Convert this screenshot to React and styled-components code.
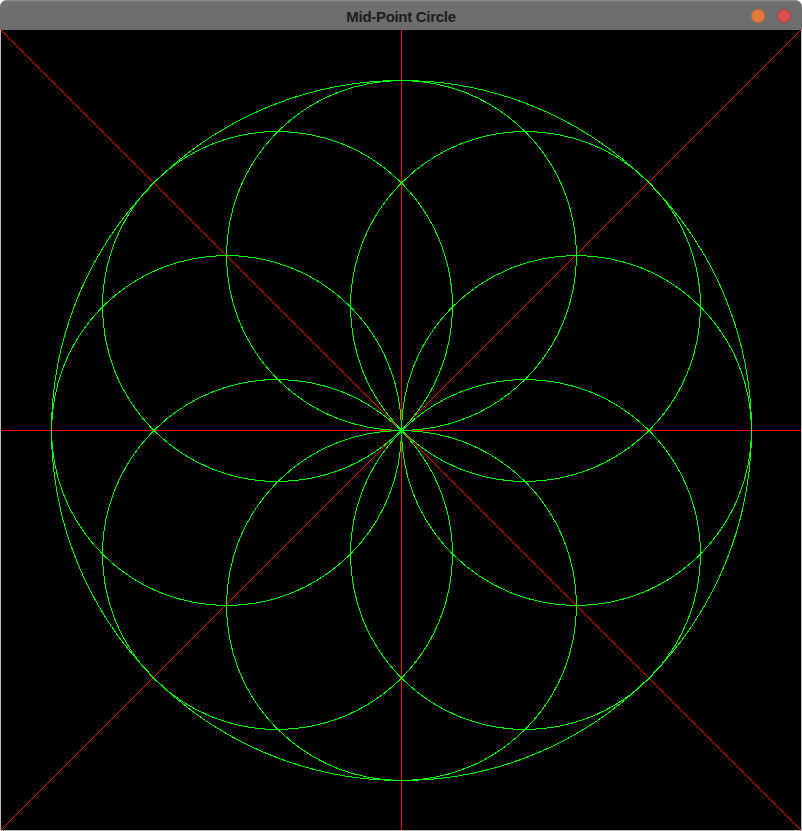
import React from 'react';
import styled, { createGlobalStyle } from 'styled-components';

const Global = createGlobalStyle`
  html, body { margin: 0; padding: 0; background: #ffffff; }
`;

const Window = styled.div`
  width: 802px;
  height: 831px;
  display: flex;
  flex-direction: column;
  border-radius: 7px 7px 0 0;
  overflow: hidden;
  background: #bdbdbd;
`;

const TitleBar = styled.div`
  height: 30px;
  flex: 0 0 30px;
  display: flex;
  align-items: center;
  justify-content: center;
  position: relative;
  background: linear-gradient(#7a7a7a 0px, #6f6f6f 2px, #6c6c6c 100%);
  border-top: 1px solid #8a8a8a;
  box-sizing: border-box;
`;

const Title = styled.span`
  font-family: "Liberation Sans", Arial, sans-serif;
  font-weight: bold;
  font-size: 15px;
  color: #1c1c1c;
  letter-spacing: -0.3px;
  padding-top: 1px;
`;

const Buttons = styled.div`
  position: absolute;
  right: 11px;
  top: 8px;
  display: flex;
  gap: 12px;
`;

const Dot = styled.span`
  width: 14px;
  height: 14px;
  border-radius: 50%;
  box-sizing: border-box;
  background: ${p => p.$color};
  border: 1px solid ${p => p.$edge};
`;

const CanvasArea = styled.div`
  flex: 1;
  padding: 0 1px 1px 1px;
  display: flex;
`;

const Canvas = styled.svg`
  display: block;
  width: 800px;
  height: 800px;
  background: #000000;
`;

const R = 350;
const r = 175;

function Circles() {
  const c = 400;
  const small = [];
  for (let i = 0; i < 8; i++) {
    const a = (i * Math.PI) / 4;
    small.push({ x: c + r * Math.cos(a), y: c - r * Math.sin(a) });
  }
  return (
    <Canvas viewBox="0 0 800 800" shapeRendering="crispEdges">
      <g stroke="#ff0000" strokeWidth="1">
        <line x1="0" y1="400.5" x2="800" y2="400.5" />
        <line x1="400.5" y1="0" x2="400.5" y2="800" />
        <line x1="0" y1="800" x2="800" y2="0" />
        <line x1="0" y1="0" x2="800" y2="800" />
      </g>
      <g stroke="#00ff00" strokeWidth="1" fill="none">
        <circle cx={c + 0.5} cy={c + 0.5} r={R} />
        {small.map((p, i) => (
          <circle key={i} cx={Math.round(p.x) + 0.5} cy={Math.round(p.y) + 0.5} r={r} />
        ))}
      </g>
    </Canvas>
  );
}

export default function App() {
  return (
    <>
      <Global />
      <Window>
        <TitleBar>
          <Title>Mid-Point Circle</Title>
          <Buttons>
            <Dot $color="#e37b3a" $edge="#c9692e" />
            <Dot $color="#d85050" $edge="#b93c3c" />
          </Buttons>
        </TitleBar>
        <CanvasArea>
          <Circles />
        </CanvasArea>
      </Window>
    </>
  );
}
